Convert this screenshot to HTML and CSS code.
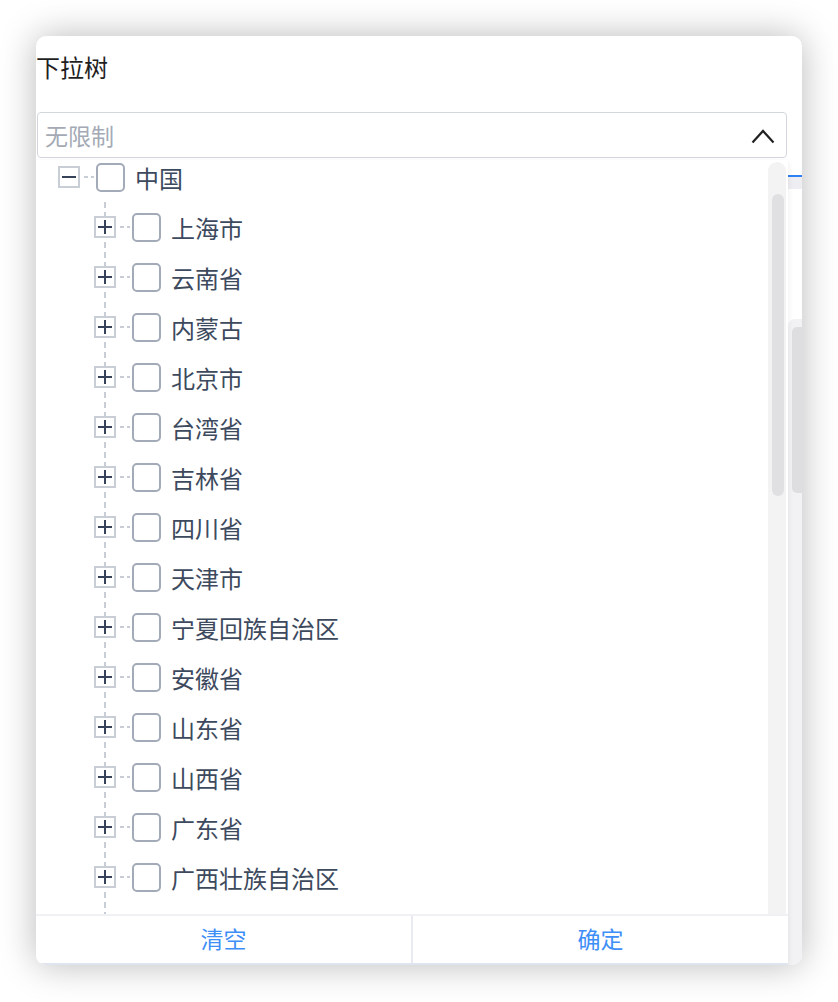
FILE: index.html
```html
<!DOCTYPE html>
<html lang="zh-CN">
<head>
    <meta charset="UTF-8">
    <meta name="viewport" content="width=device-width, initial-scale=1.0">
    <title>下拉树</title>
    <link rel="stylesheet" href="styles.css">
</head>
<body>
    <div class="page">
        <div class="card">
            <div class="title">下拉树</div>
            <div class="select">
                <span class="placeholder">无限制</span>
                <svg class="arrow" width="24" height="16" viewBox="0 0 24 16">
                    <polyline points="1.5,14.5 12,3 22.5,14.5" fill="none" stroke="#222" stroke-width="2.2"/>
                </svg>
            </div>

            <!-- page content under the open dropdown -->
            <div class="behind">
                <div class="tab-strip"></div>
                <div class="behind-body">
                    <div class="behind-main"></div>
                    <div class="page-track"><div class="page-thumb"></div></div>
                </div>
            </div>

            <div class="dropdown">
                <div class="tree-area">
                    <div class="tree">
                        <div class="node-row">
                            <span class="switcher minus"></span>
                            <span class="connector"></span>
                            <span class="checkbox"></span>
                            <span class="label">中国</span>
                        </div>
                        <div class="children">
                            <div class="node-row"><span class="switcher"></span><span class="connector"></span><span class="checkbox"></span><span class="label">上海市</span></div>
                            <div class="node-row"><span class="switcher"></span><span class="connector"></span><span class="checkbox"></span><span class="label">云南省</span></div>
                            <div class="node-row"><span class="switcher"></span><span class="connector"></span><span class="checkbox"></span><span class="label">内蒙古</span></div>
                            <div class="node-row"><span class="switcher"></span><span class="connector"></span><span class="checkbox"></span><span class="label">北京市</span></div>
                            <div class="node-row"><span class="switcher"></span><span class="connector"></span><span class="checkbox"></span><span class="label">台湾省</span></div>
                            <div class="node-row"><span class="switcher"></span><span class="connector"></span><span class="checkbox"></span><span class="label">吉林省</span></div>
                            <div class="node-row"><span class="switcher"></span><span class="connector"></span><span class="checkbox"></span><span class="label">四川省</span></div>
                            <div class="node-row"><span class="switcher"></span><span class="connector"></span><span class="checkbox"></span><span class="label">天津市</span></div>
                            <div class="node-row"><span class="switcher"></span><span class="connector"></span><span class="checkbox"></span><span class="label">宁夏回族自治区</span></div>
                            <div class="node-row"><span class="switcher"></span><span class="connector"></span><span class="checkbox"></span><span class="label">安徽省</span></div>
                            <div class="node-row"><span class="switcher"></span><span class="connector"></span><span class="checkbox"></span><span class="label">山东省</span></div>
                            <div class="node-row"><span class="switcher"></span><span class="connector"></span><span class="checkbox"></span><span class="label">山西省</span></div>
                            <div class="node-row"><span class="switcher"></span><span class="connector"></span><span class="checkbox"></span><span class="label">广东省</span></div>
                            <div class="node-row"><span class="switcher"></span><span class="connector"></span><span class="checkbox"></span><span class="label">广西壮族自治区</span></div>
                        </div>
                    </div>
                    <div class="tree-track"><div class="tree-thumb"></div></div>
                </div>
                <div class="footer">
                    <button class="footer-btn">清空</button>
                    <button class="footer-btn">确定</button>
                </div>
            </div>
        </div>
    </div>
</body>
</html>
```

FILE: styles.css
```css
body {
    margin: 0;
    background: #fff;
    font-family: "Noto Sans CJK SC", "Noto Sans", sans-serif;
}
.page {
    padding: 36px;
}
.card {
    position: relative;
    width: 766px;
    height: 929px;
    background: #fff;
    border-radius: 10px;
    box-shadow: 0 0 36px rgba(0, 0, 0, 0.28);
    overflow: hidden;
    display: flex;
    flex-direction: column;
}
.title {
    height: 64px;
    line-height: 62px;
    font-size: 24px;
    color: #1f1f1f;
}
.select {
    margin: 12px 15px 0 1px;
    height: 44px;
    border: 1.5px solid #d3d7dd;
    border-radius: 4px;
    display: flex;
    align-items: center;
    justify-content: space-between;
    padding: 0 11px 0 7px;
}
.placeholder {
    font-size: 23px;
    color: #a4aab5;
}
.arrow {
    display: block;
    margin-top: 1px;
}
.behind {
    flex: 1;
    margin-top: 17px;
    border-top: 2px solid #2f80f5;
    display: flex;
    flex-direction: column;
}
.tab-strip {
    height: 12px;
    background: #eeeef2;
}
.behind-body {
    flex: 1;
    display: flex;
}
.behind-main {
    flex: 1;
}
.page-track {
    width: 14px;
    margin-top: 130px;
    background: #f2f2f4;
    border-radius: 7px 0 0 0;
}
.page-thumb {
    margin: 8px 0 0 4px;
    height: 166px;
    background: #dedee1;
    border-radius: 5px 0 0 5px;
}
.dropdown {
    position: absolute;
    top: 124px;
    left: 0;
    width: 752px;
    bottom: 0;
    background: #fff;
    box-shadow: 0 2px 6px rgba(0, 0, 0, 0.08);
    display: flex;
    flex-direction: column;
}
.tree-area {
    flex: 1;
    display: flex;
    overflow: hidden;
}
.tree {
    flex: 1;
    margin-top: -8px;
    padding-left: 22px;
}
.node-row {
    height: 50px;
    display: flex;
    align-items: center;
}
.children {
    position: relative;
    padding-left: 36px;
    padding-bottom: 50px;
}
/* dashed guide through the child switchers */
.children::before {
    content: "";
    position: absolute;
    left: 46px;
    top: 0;
    bottom: 0;
    width: 2px;
    background: repeating-linear-gradient(to bottom, #c9cdd5 0 6px, transparent 6px 10px);
}
.switcher {
    position: relative;
    z-index: 1;
    width: 18px;
    height: 18px;
    border: 2px solid #c9cdd5;
    background: #fff;
    flex-shrink: 0;
}
.switcher::before,
.switcher::after {
    content: "";
    position: absolute;
    background: #36425a;
}
.switcher::before {
    left: 2px;
    right: 2px;
    top: 8px;
    height: 2px;
}
.switcher::after {
    top: 2px;
    bottom: 2px;
    left: 8px;
    width: 2px;
}
.switcher.minus::after {
    display: none;
}
.connector {
    width: 13px;
    height: 2px;
    margin: 0 2px 0 1px;
    background: repeating-linear-gradient(to right, transparent 0 3px, #c9cdd5 3px 7px);
}
.checkbox {
    width: 25px;
    height: 25px;
    border: 2px solid #a3aab8;
    border-radius: 5px;
    flex-shrink: 0;
}
.label {
    margin-left: 10px;
    font-size: 24px;
    color: #3d4a5e;
    white-space: nowrap;
}
.tree-track {
    width: 18px;
    margin: 2px 2px 0 0;
    background: #f3f3f4;
    border-radius: 9px 9px 0 0;
}
.tree-thumb {
    margin: 32px 2px 0 4px;
    height: 302px;
    background: #e0e0e2;
    border-radius: 6px;
}
.footer {
    height: 47px;
    display: flex;
    border-top: 2px solid #f0f1f5;
    border-bottom: 2px solid #dfe4ee;
}
.footer-btn {
    flex: 1;
    border: none;
    background: #fff;
    font-family: inherit;
    font-size: 23px;
    line-height: 30px;
    color: #3e8ef7;
    padding: 0 0 4px;
}
.footer-btn + .footer-btn {
    border-left: 2px solid #e8eaef;
}
```
